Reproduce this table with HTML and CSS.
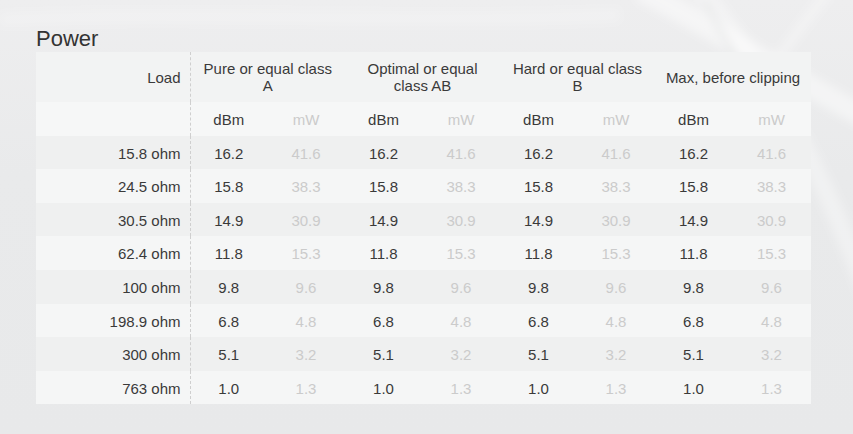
FILE: index.html
```html
<!DOCTYPE html>
<html lang="en">
<head>
<meta charset="utf-8">
<title>Power</title>
<link rel="stylesheet" href="styles.css">
</head>
<body>
<div class="backdrop" aria-hidden="true">
  <svg width="853" height="434" viewBox="0 0 853 434">
    <defs>
      <filter id="soft" x="-20%" y="-20%" width="140%" height="140%">
        <feGaussianBlur stdDeviation="5"/>
      </filter>
    </defs>
    <g filter="url(#soft)" fill="none">
      <path d="M640 -10 C 700 20, 760 60, 870 120" stroke="#ffffff" stroke-opacity="0.45" stroke-width="22"/>
      <path d="M700 -10 C 740 40, 800 110, 870 300" stroke="#ffffff" stroke-opacity="0.35" stroke-width="18"/>
      <path d="M830 -10 C 790 40, 760 80, 740 130" stroke="#ffffff" stroke-opacity="0.3" stroke-width="10"/>
      <path d="M705 0 C 720 30, 730 50, 745 70" stroke="#d8d9da" stroke-opacity="0.5" stroke-width="4"/>
      <path d="M0 20 C 200 10, 400 25, 620 15" stroke="#ffffff" stroke-opacity="0.2" stroke-width="14"/>
    </g>
  </svg>
</div>
<main class="page">
  <h1 class="title">Power</h1>
  <table class="power">
    <colgroup>
      <col class="c-load">
      <col class="c-dbm"><col class="c-mw">
      <col class="c-dbm"><col class="c-mw">
      <col class="c-dbm"><col class="c-mw">
      <col class="c-dbm"><col class="c-mw-last">
    </colgroup>
    <thead>
      <tr class="head-main">
        <th class="load">Load</th>
        <th colspan="2">Pure or equal class A</th>
        <th colspan="2">Optimal or equal class AB</th>
        <th colspan="2">Hard or equal class B</th>
        <th colspan="2">Max, before clipping</th>
      </tr>
      <tr class="head-unit">
        <th class="load"></th>
        <th>dBm</th><th class="mw">mW</th>
        <th>dBm</th><th class="mw">mW</th>
        <th>dBm</th><th class="mw">mW</th>
        <th>dBm</th><th class="mw">mW</th>
      </tr>
    </thead>
    <tbody>
      <tr><td class="load">15.8 ohm</td><td>16.2</td><td class="mw">41.6</td><td>16.2</td><td class="mw">41.6</td><td>16.2</td><td class="mw">41.6</td><td>16.2</td><td class="mw">41.6</td></tr>
      <tr><td class="load">24.5 ohm</td><td>15.8</td><td class="mw">38.3</td><td>15.8</td><td class="mw">38.3</td><td>15.8</td><td class="mw">38.3</td><td>15.8</td><td class="mw">38.3</td></tr>
      <tr><td class="load">30.5 ohm</td><td>14.9</td><td class="mw">30.9</td><td>14.9</td><td class="mw">30.9</td><td>14.9</td><td class="mw">30.9</td><td>14.9</td><td class="mw">30.9</td></tr>
      <tr><td class="load">62.4 ohm</td><td>11.8</td><td class="mw">15.3</td><td>11.8</td><td class="mw">15.3</td><td>11.8</td><td class="mw">15.3</td><td>11.8</td><td class="mw">15.3</td></tr>
      <tr><td class="load">100 ohm</td><td>9.8</td><td class="mw">9.6</td><td>9.8</td><td class="mw">9.6</td><td>9.8</td><td class="mw">9.6</td><td>9.8</td><td class="mw">9.6</td></tr>
      <tr><td class="load">198.9 ohm</td><td>6.8</td><td class="mw">4.8</td><td>6.8</td><td class="mw">4.8</td><td>6.8</td><td class="mw">4.8</td><td>6.8</td><td class="mw">4.8</td></tr>
      <tr><td class="load">300 ohm</td><td>5.1</td><td class="mw">3.2</td><td>5.1</td><td class="mw">3.2</td><td>5.1</td><td class="mw">3.2</td><td>5.1</td><td class="mw">3.2</td></tr>
      <tr><td class="load">763 ohm</td><td>1.0</td><td class="mw">1.3</td><td>1.0</td><td class="mw">1.3</td><td>1.0</td><td class="mw">1.3</td><td>1.0</td><td class="mw">1.3</td></tr>
    </tbody>
  </table>
</main>
</body>
</html>
```

FILE: styles.css
```css
html, body {
  margin: 0;
  padding: 0;
}

body {
  background: linear-gradient(180deg, #eeeeef 0%, #e9eaeb 40%, #e8e9ea 100%);
  font-family: "Liberation Sans", Arial, sans-serif;
  color: #3a3a3a;
  width: 853px;
  height: 434px;
  overflow: hidden;
  position: relative;
}

.backdrop {
  position: absolute;
  left: 0;
  top: 0;
  width: 853px;
  height: 434px;
  z-index: 0;
  pointer-events: none;
}

.backdrop svg {
  display: block;
}

.page {
  position: relative;
  z-index: 1;
  padding: 26px 0 0 36px;
}

.title {
  margin: 0;
  font-size: 22px;
  line-height: 26px;
  font-weight: normal;
  color: #333333;
}

.power {
  border-collapse: collapse;
  table-layout: fixed;
  width: 775px;
  font-size: 15px;
}

.c-load { width: 154px; }
.c-dbm { width: 77px; }
.c-mw { width: 78px; }
.c-mw-last { width: 79px; }

.power th,
.power td {
  font-weight: normal;
  padding: 9px 8px 7px;
  text-align: center;
  vertical-align: middle;
  line-height: 17.6px;
  color: #3a3a3a;
}

.power .load {
  text-align: right;
  padding-right: 9px;
  border-right: 1px dashed #cfcfcf;
}

.power .mw {
  color: #cbcbcb;
}

.head-main th {
  line-height: 17px;
  padding-top: 8px;
  padding-bottom: 8px;
  background: #f2f3f3;
}

.head-unit th {
  background: #f6f7f7;
}

.power tbody tr:nth-child(odd) td {
  background: #eff0f0;
}

.power tbody tr:nth-child(even) td {
  background: #f5f6f6;
}
```
